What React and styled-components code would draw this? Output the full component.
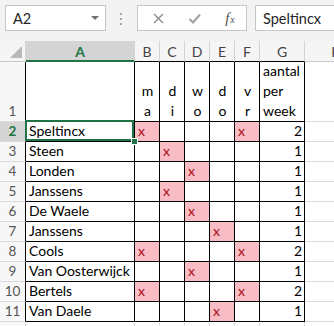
import React from 'react';
import styled, { createGlobalStyle } from 'styled-components';

const GlobalStyle = createGlobalStyle`
  html, body { margin: 0; padding: 0; }
  body { background: #fff; font-family: Lato, "Open Sans", sans-serif; }
`;

const Window = styled.div`
  width: 334px;
  height: 326px;
  overflow: hidden;
  background: #fff;
`;

const FormulaBar = styled.div`
  display: flex;
  align-items: flex-start;
  height: 41px;
  box-sizing: border-box;
  padding: 5px 0 0 5px;
  background: #f3f3f3;
`;

const Box = styled.div`
  flex: none;
  height: 26px;
  box-sizing: border-box;
  background: #fff;
  border: 1px solid #c6c6c6;
  display: flex;
  align-items: center;
  font-size: 14.5px;
  color: #262626;
`;

const NameBox = styled(Box)`
  width: 101px;
  padding: 0 6px 0 7px;
  justify-content: space-between;
`;

const Caret = styled.span`
  width: 0;
  height: 0;
  border-left: 4px solid transparent;
  border-right: 4px solid transparent;
  border-top: 4px solid #707070;
`;

const Grip = styled.div`
  flex: none;
  display: flex;
  flex-direction: column;
  gap: 3px;
  margin: 8px 15px 0 14px;
  span { width: 2px; height: 2px; background: #a8a8a8; }
`;

const ButtonBox = styled(Box)`
  width: 110px;
  padding-left: 2px;
  display: grid;
  grid-template-columns: repeat(3, 36px);
  justify-items: center;
`;

const Fx = styled.span`
  font-family: "Liberation Serif", serif;
  font-style: italic;
  color: #505050;
  font-size: 15px;
  sub { font-size: 10px; vertical-align: baseline; margin-left: 1px; }
`;

const Formula = styled(Box)`
  width: 100px;
  margin-left: 8px;
  padding-left: 7px;
`;

const Sheet = styled.div`
  display: grid;
  grid-template-columns: 26px 109px repeat(5, 25px) 45px 64px;
  grid-template-rows: 21px 60px;
  grid-auto-rows: 20px;
  width: max-content;
  font-size: 14px;
`;

const Corner = styled.div`
  box-sizing: border-box;
  background: #f5f5f5;
  border-right: 1px solid #d4d4d4;
  border-bottom: 1px solid #c8c8c8;
`;

const ColHead = styled.div`
  box-sizing: border-box;
  display: flex;
  align-items: center;
  justify-content: center;
  padding-top: 1px;
  background: ${p => (p.$active ? '#d4d4d4' : '#f5f5f5')};
  color: ${p => (p.$active ? '#217346' : '#444')};
  font-weight: ${p => (p.$active ? 700 : 400)};
  border-right: 1px solid #d4d4d4;
  border-bottom: ${p => (p.$active ? '2px solid #217346' : `1px solid ${p.$line}`)};
`;

const RowHead = styled.div`
  box-sizing: border-box;
  display: flex;
  align-items: flex-end;
  justify-content: center;
  line-height: 20px;
  font-size: 13.5px;
  background: ${p => (p.$active ? '#d4d4d4' : '#f7f7f7')};
  color: ${p => (p.$active ? '#217346' : '#555')};
  font-weight: ${p => (p.$active ? 700 : 400)};
  border-right: 1px solid ${p => (p.$plain ? '#d4d4d4' : '#000')};
  border-bottom: 1px solid #dadada;
`;

const Cell = styled.div`
  box-sizing: border-box;
  position: relative;
  display: flex;
  align-items: flex-end;
  justify-content: ${p => ({ right: 'flex-end', center: 'center' }[p.$align] || 'flex-start')};
  padding: 0 2px 0 3px;
  line-height: 20px;
  white-space: ${p => (p.$wrap ? 'pre-line' : 'nowrap')};
  text-align: ${p => p.$align || 'left'};
  background: ${p => (p.$mark ? '#f8bcc5' : '#fff')};
  color: ${p => (p.$mark ? '#a80d16' : '#000')};
  border-right: 1px solid ${p => (p.$plain ? '#dadada' : '#000')};
  border-bottom: 1px solid ${p => (p.$plain ? '#dadada' : '#000')};
  z-index: ${p => (p.$selected ? 2 : 'auto')};

  ${p => p.$selected && `
    &::after {
      content: '';
      position: absolute;
      left: -1px; top: -2px; right: 0; bottom: 0;
      border: 2px solid #217346;
    }
    &::before {
      content: '';
      position: absolute;
      right: -4px; bottom: -4px;
      width: 5px; height: 5px;
      background: #217346;
      border: 1px solid #fff;
      z-index: 3;
    }
  `}
`;

const cols = ['A', 'B', 'C', 'D', 'E', 'F', 'G', 'H'];
const days = ['m\na', 'd\ni', 'w\no', 'd\no', 'v\nr'];

const people = [
  ['Speltincx', [0, 4], 2],
  ['Steen', [1], 1],
  ['Londen', [2], 1],
  ['Janssens', [1], 1],
  ['De Waele', [2], 1],
  ['Janssens', [3], 1],
  ['Cools', [0, 4], 2],
  ['Van Oosterwijck', [2], 1],
  ['Bertels', [0, 4], 2],
  ['Van Daele', [3], 1],
];

const Cross = () => (
  <svg width="11" height="11" viewBox="0 0 11 11">
    <path d="M1 1 L10 10 M10 1 L1 10" stroke="#8c8c8c" strokeWidth="1.4" />
  </svg>
);

const Check = () => (
  <svg width="13" height="11" viewBox="0 0 13 11">
    <path d="M1.5 6 L5 9.5 L12 1.5" stroke="#a0a0a0" strokeWidth="2" fill="none" />
  </svg>
);

const Triangle = () => (
  <svg width="26" height="21" viewBox="0 0 26 21" style={{ display: 'block' }}>
    <polygon points="10,17 22,17 22,5" fill="#b9b9b9" />
  </svg>
);

export default function App() {
  return (
    <Window>
      <GlobalStyle />
      <FormulaBar>
        <NameBox>
          <span>A2</span>
          <Caret />
        </NameBox>
        <Grip><span /><span /><span /></Grip>
        <ButtonBox>
          <Cross />
          <Check />
          <Fx>f<sub>x</sub></Fx>
        </ButtonBox>
        <Formula>Speltincx</Formula>
      </FormulaBar>

      <Sheet>
        <Corner><Triangle /></Corner>
        {cols.map(c => (
          <ColHead key={c} $active={c === 'A'} $line={c === 'H' ? '#c8c8c8' : '#000'}>{c}</ColHead>
        ))}

        <RowHead>1</RowHead>
        <Cell />
        {days.map((d, i) => (
          <Cell key={i} $align="center" $wrap>{d}</Cell>
        ))}
        <Cell $wrap>{'aantal\nper\nweek'}</Cell>
        <Cell $plain />

        {people.map(([name, marks, total], r) => (
          <React.Fragment key={r}>
            <RowHead $active={r === 0}>{r + 2}</RowHead>
            <Cell $selected={r === 0}>{name}</Cell>
            {days.map((_, i) => (
              <Cell key={i} $mark={marks.includes(i)}>{marks.includes(i) ? 'x' : ''}</Cell>
            ))}
            <Cell $align="right">{total}</Cell>
            <Cell $plain />
          </React.Fragment>
        ))}

        <RowHead $plain>12</RowHead>
        {cols.map(c => <Cell key={c} $plain />)}
      </Sheet>
    </Window>
  );
}
